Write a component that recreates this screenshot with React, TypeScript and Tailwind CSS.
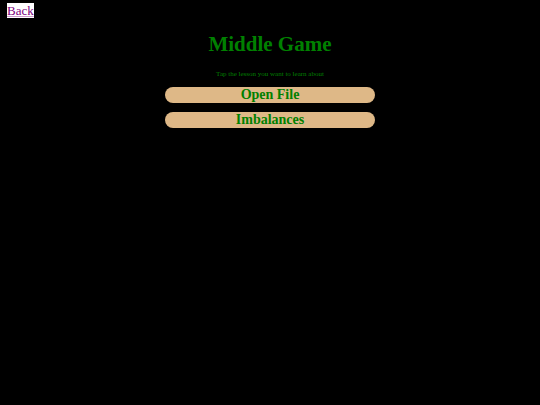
import React from 'react';

const lessons = [
    { id: 1, name: 'Open File', href: '#open-file' },
    { id: 2, name: 'Imbalances', href: '#imbalances' },
];

const App: React.FC = () => {
    return (
        <div className="min-h-screen bg-black px-[7px] pt-[3px] font-['Liberation_Serif',serif] text-[#008000]">
            <nav className="flex">
                <a
                    href="#back"
                    className="bg-white text-[13px] leading-[15px] text-[#800080] underline decoration-[#800080]/40"
                >
                    Back
                </a>
            </nav>
            <main className="flex flex-col items-center text-center">
                <h1 className="mt-3.5 text-[21px] leading-6 font-bold">Middle Game</h1>
                <p className="mt-3.5 text-[7px] leading-2">Tap the lesson you want to learn about</p>
                <ul className="mt-[9px] flex w-2/5 flex-col gap-[9px]">
                    {lessons.map((lesson) => (
                        <li key={lesson.id}>
                            <a
                                href={lesson.href}
                                className="block rounded-full bg-[#deb887] text-[14px] leading-4 font-bold"
                            >
                                {lesson.name}
                            </a>
                        </li>
                    ))}
                </ul>
            </main>
        </div>
    );
};

export default App;
